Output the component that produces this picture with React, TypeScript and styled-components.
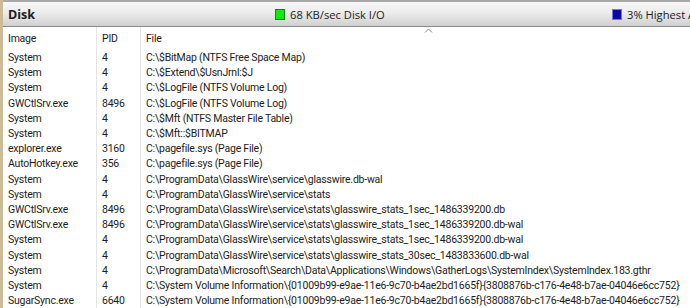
import React from 'react';
import styled, { createGlobalStyle } from 'styled-components';

const GlobalStyle = createGlobalStyle`
  html, body {
    margin: 0;
    padding: 0;
    background: #ffffff;
    overflow: hidden;
  }
`;

const Window = styled.div`
  width: 690px;
  height: 308px;
  overflow: hidden;
  border-left: 3px solid #cbbb96;
  box-sizing: border-box;
  font-family: Roboto, 'Open Sans', sans-serif;
  font-size: 10.5px;
  letter-spacing: -0.22px;
  color: #1c1c1c;
  background: #ffffff;
`;

const TitleBar = styled.div`
  height: 27px;
  box-sizing: border-box;
  display: flex;
  align-items: center;
  padding-left: 5px;
  border-top: 2px solid #a9a9a9;
  border-bottom: 1px solid #8a8a8a;
  background: linear-gradient(to bottom, #f8f8f8 0%, #ececec 45%, #d0d0d0 100%);
  white-space: nowrap;
  overflow: hidden;
  letter-spacing: 0;
`;

const Title = styled.div`
  font-family: 'Open Sans', sans-serif;
  font-weight: 700;
  font-size: 12.5px;
  width: 267px;
  flex-shrink: 0;
`;

const Legend = styled.div<{ $width?: number }>`
  display: flex;
  align-items: center;
  gap: 5px;
  font-family: 'Open Sans', sans-serif;
  font-size: 11.2px;
  width: ${(p) => (p.$width ? `${p.$width}px` : 'auto')};
  flex-shrink: 0;
`;

const Swatch = styled.span<{ $color: string; $edge: string }>`
  width: 8px;
  height: 9px;
  background: ${(p) => p.$color};
  border: 1px solid ${(p) => p.$edge};
  display: inline-block;
`;

const Table = styled.div`
  position: relative;
`;

const Row = styled.div<{ $header?: boolean }>`
  display: grid;
  grid-template-columns: 93px 44px 1fr;
  height: ${(p) => (p.$header ? '23px' : '15.2px')};
  white-space: nowrap;
`;

const Cell = styled.div<{ $first?: boolean }>`
  padding-left: 5px;
  border-left: ${(p) => (p.$first ? 'none' : '1px solid #e4e4e4')};
  height: 100%;
  display: flex;
  align-items: center;
`;

const SortCaret = styled.svg`
  position: absolute;
  left: 421px;
  top: 1px;
`;

const rows: [string, string, string][] = [
  ['System', '4', 'C:\\$BitMap (NTFS Free Space Map)'],
  ['System', '4', 'C:\\$Extend\\$UsnJrnl:$J'],
  ['System', '4', 'C:\\$LogFile (NTFS Volume Log)'],
  ['GWCtlSrv.exe', '8496', 'C:\\$LogFile (NTFS Volume Log)'],
  ['System', '4', 'C:\\$Mft (NTFS Master File Table)'],
  ['System', '4', 'C:\\$Mft::$BITMAP'],
  ['explorer.exe', '3160', 'C:\\pagefile.sys (Page File)'],
  ['AutoHotkey.exe', '356', 'C:\\pagefile.sys (Page File)'],
  ['System', '4', 'C:\\ProgramData\\GlassWire\\service\\glasswire.db-wal'],
  ['System', '4', 'C:\\ProgramData\\GlassWire\\service\\stats'],
  ['GWCtlSrv.exe', '8496', 'C:\\ProgramData\\GlassWire\\service\\stats\\glasswire_stats_1sec_1486339200.db'],
  ['GWCtlSrv.exe', '8496', 'C:\\ProgramData\\GlassWire\\service\\stats\\glasswire_stats_1sec_1486339200.db-wal'],
  ['System', '4', 'C:\\ProgramData\\GlassWire\\service\\stats\\glasswire_stats_1sec_1486339200.db-wal'],
  ['System', '4', 'C:\\ProgramData\\GlassWire\\service\\stats\\glasswire_stats_30sec_1483833600.db-wal'],
  ['System', '4', 'C:\\ProgramData\\Microsoft\\Search\\Data\\Applications\\Windows\\GatherLogs\\SystemIndex\\SystemIndex.183.gthr'],
  ['System', '4', 'C:\\System Volume Information\\{01009b99-e9ae-11e6-9c70-b4ae2bd1665f}{3808876b-c176-4e48-b7ae-04046e6cc752}'],
  ['SugarSync.exe', '6640', 'C:\\System Volume Information\\{01009b99-e9ae-11e6-9c70-b4ae2bd1665f}{3808876b-c176-4e48-b7ae-04046e6cc752}'],
];

export default function App() {
  return (
    <>
      <GlobalStyle />
      <Window>
        <TitleBar>
          <Title>Disk</Title>
          <Legend $width={337}>
            <Swatch $color="#12e812" $edge="#0c8a0c" />
            68 KB/sec Disk I/O
          </Legend>
          <Legend>
            <Swatch $color="#0808b0" $edge="#7a7ac8" />
            3% Highest Active Time
          </Legend>
        </TitleBar>
        <Table>
          <SortCaret width="9" height="5" viewBox="0 0 9 5">
            <path d="M1 4.5 L4.5 1 L8 4.5" fill="none" stroke="#8c8c8c" strokeWidth="1" />
          </SortCaret>
          <Row $header>
            <Cell $first>Image</Cell>
            <Cell>PID</Cell>
            <Cell>File</Cell>
          </Row>
          {rows.map(([image, pid, file], i) => (
            <Row key={i}>
              <Cell $first>{image}</Cell>
              <Cell>{pid}</Cell>
              <Cell>{file}</Cell>
            </Row>
          ))}
        </Table>
      </Window>
    </>
  );
}
